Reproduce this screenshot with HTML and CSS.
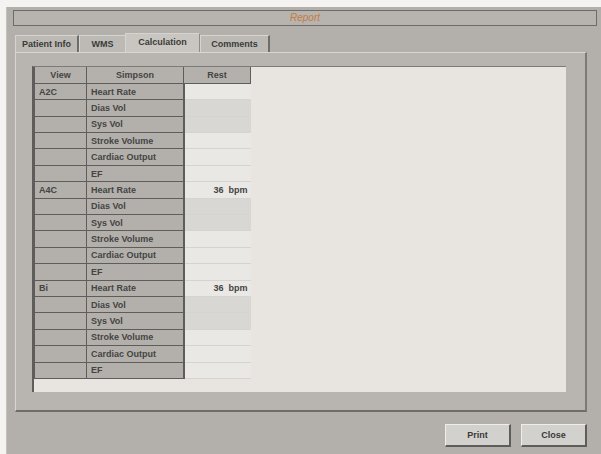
FILE: index.html
```html
<!DOCTYPE html>
<html lang="en">
<head>
    <meta charset="UTF-8">
    <meta name="viewport" content="width=device-width, initial-scale=1.0">
    <title>Report</title>
    <link rel="stylesheet" href="styles.css">
</head>
<body>

    <div class="window">
        <div class="titlebar">Report</div>

        <div class="content">
            <div class="tabs">
                <div class="tab tab-patient">Patient Info</div>
                <div class="tab tab-wms">WMS</div>
                <div class="tab tab-calc active">Calculation</div>
                <div class="tab tab-comments">Comments</div>
            </div>

            <div class="panel">
                <div class="sheet">
                    <table class="calc-table">
                        <thead>
                            <tr>
                                <th class="col-view">View</th>
                                <th class="col-name">Simpson</th>
                                <th class="col-rest">Rest</th>
                            </tr>
                        </thead>
                        <tbody id="table-body">
                        </tbody>
                    </table>
                </div>
            </div>

            <div class="buttons">
                <button class="btn">Print</button>
                <button class="btn">Close</button>
            </div>
        </div>
    </div>

    <script>
        const views = [
            { name: "A2C", rate: "" },
            { name: "A4C", rate: "36&nbsp;&nbsp;bpm" },
            { name: "Bi", rate: "36&nbsp;&nbsp;bpm" }
        ];

        const fields = ["Heart Rate", "Dias Vol", "Sys Vol", "Stroke Volume", "Cardiac Output", "EF"];

        function buildTable() {
            const tableBody = document.getElementById("table-body");
            tableBody.innerHTML = "";

            views.forEach((view) => {
                fields.forEach((field, index) => {
                    const row = document.createElement("tr");
                    const shade = (index === 1 || index === 2) ? "rest dim" : "rest";
                    row.innerHTML = `
                        <td class="col-view">${index === 0 ? view.name : ""}</td>
                        <td class="col-name">${field}</td>
                        <td class="${shade}">${index === 0 ? view.rate : ""}</td>
                    `;
                    tableBody.appendChild(row);
                });
            });
        }

        buildTable();
    </script>
</body>
</html>
```

FILE: styles.css
```css
body {
    margin: 0;
    background-color: #f4f3f1;
    font-family: "Liberation Sans", Arial, sans-serif;
}

.window {
    box-sizing: border-box;
    margin: 7px 0 0 6px;
    height: 447px;
    padding: 3px 4px 0 6px;
    background-color: #b3b0ab;
    border-left: 1px solid #c4c1bc;
}

.titlebar {
    box-sizing: border-box;
    height: 16px;
    border: 1px solid #6e6c69;
    background-color: #b7b4af;
    color: #c87a42;
    font-size: 10px;
    font-style: italic;
    line-height: 14px;
    text-align: center;
}

.content {
    width: 572px;
    margin-left: 2px;
}

.tabs {
    display: flex;
    align-items: flex-end;
    height: 19px;
    margin-top: 7px;
}

.tab {
    box-sizing: border-box;
    height: 17px;
    background-color: #bdbab5;
    border-top: 1px solid #d6d4d0;
    border-left: 1px solid #d6d4d0;
    border-right: 2px solid #6f6d6a;
    color: #3a3a3a;
    font-size: 9px;
    font-weight: bold;
    line-height: 16px;
    text-align: center;
}

.tab-patient { width: 64px; }
.tab-wms { width: 46px; border-right: none; }
.tab-calc { width: 75px; }
.tab-comments { width: 70px; }

.tab.active {
    height: 19px;
    background-color: #c9c6c1;
    border-right: 1px solid #8e8c89;
    line-height: 17px;
}

.panel {
    box-sizing: border-box;
    height: 360px;
    padding: 13px 19px 18px 16px;
    background-color: #b8b5b0;
    border-top: 1px solid #d8d6d2;
    border-left: 1px solid #d8d6d2;
    border-right: 2px solid #7b7976;
    border-bottom: 2px solid #6f6d6a;
}

.sheet {
    box-sizing: border-box;
    height: 326px;
    background-color: #e8e5e1;
    border-top: 1px solid #7d7b78;
    border-left: 2px solid #5f5d5b;
}

.calc-table {
    border-collapse: collapse;
    font-size: 9px;
    font-weight: bold;
    color: #444;
}

.calc-table th,
.calc-table td {
    box-sizing: border-box;
    height: 16.4px;
    padding: 0 4px;
    white-space: nowrap;
}

.calc-table th {
    background-color: #b4b1ac;
    border: 1px solid #5f5d5b;
    border-top: none;
    text-align: center;
}

.col-view { width: 52px; }
.col-name { width: 97px; }
.col-rest { width: 67px; }

.calc-table td.col-view,
.calc-table td.col-name {
    background-color: #b3b0ab;
    border: 1px solid #5f5d5b;
    border-top: 1px solid #55534f;
}

.calc-table td.col-name {
    border-right: 2px solid #5f5d5b;
}

.calc-table td.rest {
    width: 67px;
    background-color: #eae8e5;
    border-bottom: 1px solid #d6d4d1;
    text-align: right;
    padding-right: 3px;
}

.calc-table td.dim {
    background-color: #d9d7d3;
}

.buttons {
    display: flex;
    justify-content: flex-end;
    gap: 10px;
    margin-top: 12px;
}

.btn {
    box-sizing: border-box;
    width: 66px;
    height: 23px;
    padding: 0;
    background-color: #d3d1cd;
    border-top: 1px solid #eeede9;
    border-left: 1px solid #eeede9;
    border-right: 2px solid #5f5d5b;
    border-bottom: 2px solid #5f5d5b;
    color: #3a3a3a;
    font-family: "Liberation Sans", Arial, sans-serif;
    font-size: 9px;
    font-weight: bold;
}
```
